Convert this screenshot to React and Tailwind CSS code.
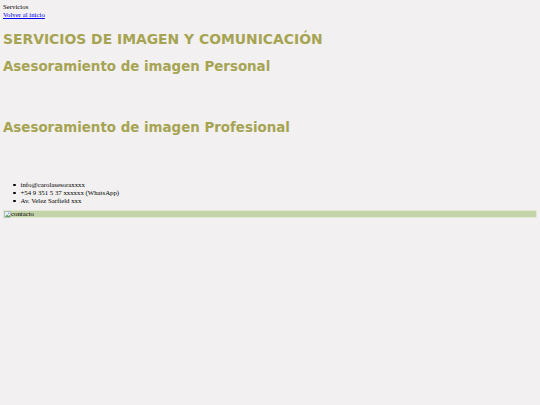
export default function App() {
  const contactos = [
    'info@carolasesoraxxxx',
    '+54 9 351 5 37 xxxxxx (WhatsApp)',
    'Av. Velez Sarfield xxx',
  ];

  const heading = { fontFamily: '"DejaVu Sans", Verdana, sans-serif' };

  return (
    <div className="min-h-[405px] bg-[#f2f0f0] px-[3px] pt-[3px] text-black" style={{ fontFamily: '"Liberation Serif", serif' }}>
      <div className="text-[6.8px] leading-[8px]">Servicios</div>
      <a href="#" className="block text-[6.8px] leading-[8px] text-[#0000ee] underline">Volver al inicio</a>

      <h1 className="mt-[12px] text-[13.9px] leading-[17px] font-bold text-[#a6a452]" style={heading}>
        SERVICIOS DE IMAGEN Y COMUNICACIÓN
      </h1>
      <h2 className="mt-[11px] text-[13.4px] leading-[16px] font-bold text-[#a6a452]" style={heading}>
        Asesoramiento de imagen Personal
      </h2>
      <h2 className="mt-[45px] text-[13.4px] leading-[16px] font-bold text-[#a6a452]" style={heading}>
        Asesoramiento de imagen Profesional
      </h2>

      <ul className="mt-[45px] text-[6.8px] leading-[8px]">
        {contactos.map((c) => (
          <li key={c} className="flex items-center">
            <span className="ml-[10px] mr-[5px] h-[2.5px] w-[2.5px] rounded-full bg-black"></span>
            <span>{c}</span>
          </li>
        ))}
      </ul>

      <div className="mt-[5px] flex h-[8px] items-center border border-[#e2e8d2] bg-[#c5d3a8] text-[6.8px] leading-[8px]">
        <svg width="7" height="7" viewBox="0 0 7 7" className="shrink-0">
          <rect x="0.5" y="0.5" width="6" height="6" fill="#e8eef3" stroke="#9aa6b0" strokeWidth="0.6" />
          <path d="M1 6 L3 3.5 L4.5 5 L6 4 L6 6 Z" fill="#5aa45a" />
          <circle cx="4.6" cy="2.2" r="0.8" fill="#6a9fd8" />
        </svg>
        <span>contacto</span>
      </div>
    </div>
  );
}
